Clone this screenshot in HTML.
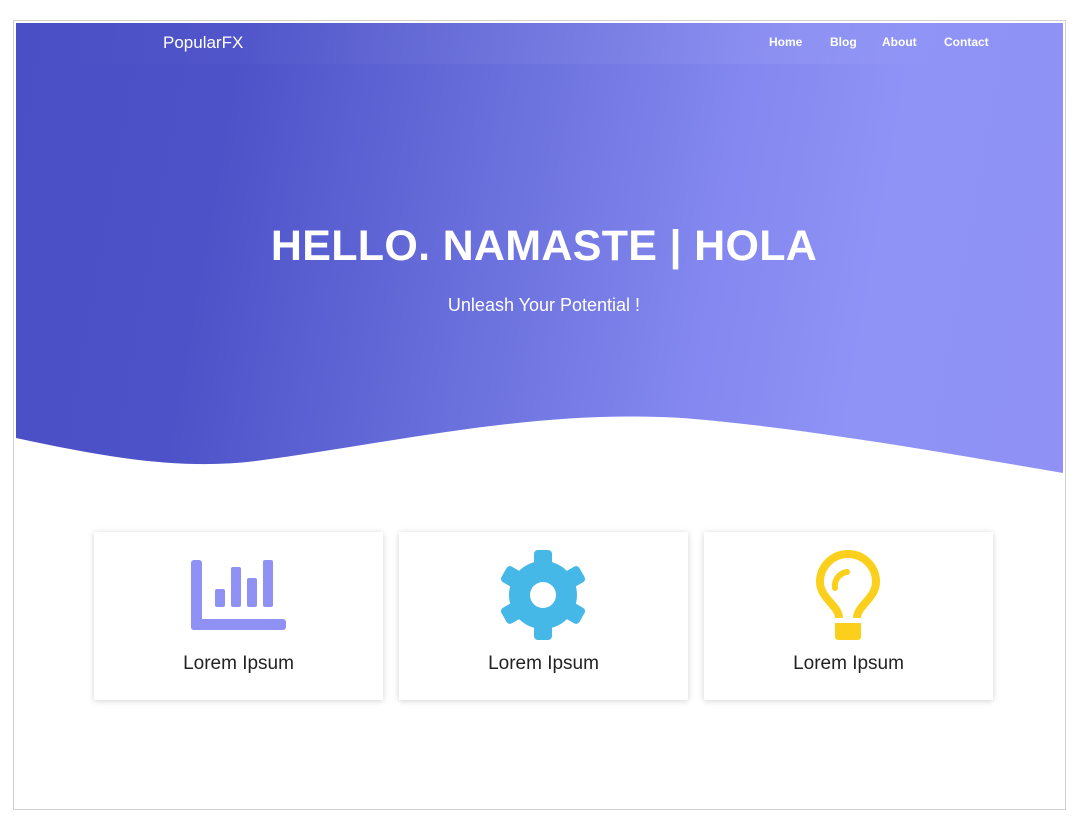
<!DOCTYPE html>
<html><head><style>
html,body{margin:0;padding:0;background:#fff;}
body{width:1080px;height:823px;position:relative;overflow:hidden;font-family:"Liberation Sans",sans-serif;}
.frame{position:absolute;left:13px;top:20px;width:1051px;height:788px;border:1px solid #cfd2cf;}
.hero{position:absolute;left:16px;top:23px;width:1047px;height:460px;overflow:hidden;
background:linear-gradient(100deg,#4b4fc5 0%,#4d52c8 20%,#6a70dc 45%,#8387ef 65%,#8f93f6 80%,#8f92f4 100%);}
.navstrip{position:absolute;left:0;top:0;width:930px;height:41px;background:linear-gradient(90deg,rgba(255,255,255,0) 0%,rgba(255,255,255,0.04) 50%,rgba(255,255,255,0.06) 85%,rgba(255,255,255,0) 100%);}
.logo{position:absolute;left:147px;top:10px;color:#fff;font-size:17px;}
.nav{position:absolute;top:12px;color:#fff;font-size:12px;font-weight:bold;}
h1{position:absolute;left:0;width:1056px;top:199px;margin:0;text-align:center;color:#fff;font-size:43px;font-weight:bold;letter-spacing:0.3px;}
.sub{position:absolute;left:0;width:1056px;top:272px;text-align:center;color:#fff;font-size:18px;}
.card{position:absolute;top:532px;width:289px;height:168px;background:#fff;box-shadow:0 1px 6px rgba(0,0,0,0.18);}
.card .t{position:absolute;left:0;width:100%;top:121px;text-align:center;font-size:19px;color:#222;}
.card svg{position:absolute;}
</style></head><body>
<div class="frame"></div>
<div class="hero">
<div class="navstrip"></div>
<div class="logo">PopularFX</div>
<div class="nav" style="left:753px">Home</div>
<div class="nav" style="left:814px">Blog</div>
<div class="nav" style="left:866px">About</div>
<div class="nav" style="left:928px">Contact</div>
<h1>HELLO. NAMASTE | HOLA</h1>
<div class="sub">Unleash Your Potential !</div>
<svg width="1047" height="460" style="position:absolute;left:0;top:0">
<path d="M0 415 C80 432 160 448 240 438 C380 420 540 380 700 398 C820 410 940 432 1047 450 L1047 460 L0 460Z" fill="#fff"/>
</svg>
</div>
<div class="card" style="left:94px">
<svg width="289" height="110" viewBox="0 0 289 110">
<rect x="97" y="28" width="11" height="70" rx="3" fill="#8f91f5"/>
<rect x="97" y="87" width="95" height="11" rx="3" fill="#8f91f5"/>
<rect x="121" y="57" width="10" height="18" rx="2" fill="#8f91f5"/>
<rect x="137" y="35" width="10" height="40" rx="2" fill="#8f91f5"/>
<rect x="153" y="46" width="10" height="29" rx="2" fill="#8f91f5"/>
<rect x="169" y="28" width="10" height="47" rx="2" fill="#8f91f5"/>
</svg>
<div class="t">Lorem Ipsum</div></div>
<div class="card" style="left:399px">
<svg width="289" height="110" viewBox="0 0 289 110">
<g transform="translate(144,63)" fill="#45b8e8">
<circle r="34"/>
<rect x="-9" y="-45" width="18" height="90" rx="4"/>
<rect x="-9" y="-45" width="18" height="90" rx="4" transform="rotate(60)"/>
<rect x="-9" y="-45" width="18" height="90" rx="4" transform="rotate(120)"/>
<circle r="13" fill="#fff"/>
</g>
</svg>
<div class="t">Lorem Ipsum</div></div>
<div class="card" style="left:704px">
<svg width="289" height="110" viewBox="0 0 289 110">
<path d="M135 86 C135 74 116 66 116 50 A28 28 0 0 1 172 50 C172 66 153 74 153 86" fill="none" stroke="#fbd01c" stroke-width="8" stroke-linejoin="round"/>
<path d="M131 56 A14 14 0 0 1 143 40" fill="none" stroke="#fbd01c" stroke-width="6" stroke-linecap="round"/>
<path d="M131 91 H157 V105 Q157 108 153 108 H135 Q131 108 131 105Z" fill="#fbd01c"/>
</svg>
<div class="t">Lorem Ipsum</div></div>
</body></html>
